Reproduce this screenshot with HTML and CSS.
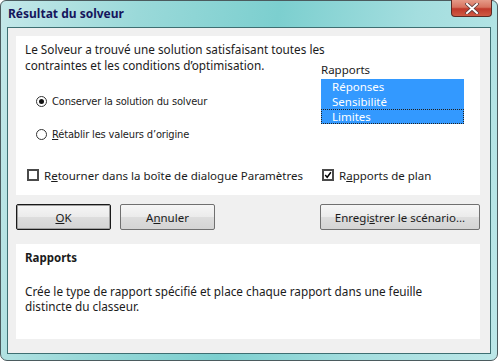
FILE: index.html
```html
<!DOCTYPE html>
<html lang="fr">
<head>
<meta charset="utf-8">
<link rel="stylesheet" href="styles.css">
</head>
<body>
<div class="window">
  <div class="titlebar">
    <span class="title">Résultat du solveur</span>
    <span class="close"><svg width="14" height="11" viewBox="0 0 14 11"><path d="M2 1 L12 10 M12 1 L2 10" stroke="#5a3a3a" stroke-width="3.6" stroke-linecap="square"/><path d="M2 1 L12 10 M12 1 L2 10" stroke="#ffffff" stroke-width="2" stroke-linecap="square"/></svg></span>
  </div>
  <div class="client">
    <div class="panel top-panel">
      <div class="main-row">
        <div class="left-col">
          <p class="intro">Le Solveur a trouvé une solution satisfaisant toutes les<br>contraintes et les conditions d’optimisation.</p>
          <div class="radio-row first"><span class="radio checked"></span><span class="tlabel">Conserver la solution du solveur</span></div>
          <div class="radio-row"><span class="radio"></span><span class="tlabel"><u>R</u>établir les valeurs d’origine</span></div>
        </div>
        <div class="right-col">
          <div class="list-label">Rapports</div>
          <div class="listbox">
            <div class="item">Réponses</div>
            <div class="item">Sensibilité</div>
            <div class="item focus">Limites</div>
          </div>
        </div>
      </div>
      <div class="check-row">
        <div class="check"><span class="box"></span><span>R<u>e</u>tourner dans la boîte de dialogue Paramètres</span></div>
        <div class="check right"><span class="box checked"><svg width="10" height="10" viewBox="0 0 10 10"><path d="M1.5 5 L4 7.8 L8.6 1.6" fill="none" stroke="#000" stroke-width="1.8"/></svg></span><span>R<u>a</u>pports de plan</span></div>
      </div>
    </div>
    <div class="buttons">
      <button class="btn default"><u>O</u>K</button>
      <button class="btn cancel">A<u>n</u>nuler</button>
      <span class="spacer"></span>
      <button class="btn save">Enregi<u>s</u>trer le scénario...</button>
    </div>
    <div class="panel bottom-panel">
      <div class="help-title">Rapports</div>
      <p class="help-text">Crée le type de rapport spécifié et place chaque rapport dans une feuille<br>distincte du classeur.</p>
    </div>
  </div>
</div>
</body>
</html>
```
FILE: styles.css
```css
html, body {
  margin: 0;
  padding: 0;
  background: #ffffff;
}
body {
  font-family: "Noto Sans", "Open Sans", sans-serif;
  font-size: 11.5px;
  color: #1b1b1b;
}
.window {
  box-sizing: border-box;
  width: 498px;
  height: 361px;
  border: 1px solid #4b5b5e;
  border-radius: 6px 6px 7px 7px;
  background: linear-gradient(100deg, #c4e8e9 0%, #9ad9d9 25%, #7ccfcf 50%, #a4dedf 75%, #bce7e8 100%);
  padding: 0 6px 6px 6px;
  display: flex;
  flex-direction: column;
}
.titlebar {
  height: 26px;
  display: flex;
  align-items: flex-start;
  justify-content: space-between;
}
.title {
  font-family: "Noto Sans", sans-serif;
  font-weight: bold;
  font-size: 12px;
  color: #15155c;
  margin: 5px 0 0 1px;
  line-height: 16px;
}
.close {
  width: 41px;
  height: 17px;
  margin-top: -1px;
  margin-right: -1px;
  box-sizing: border-box;
  border: 1px solid #5b2a24;
  border-top: none;
  border-radius: 0 0 4px 4px;
  background: linear-gradient(#e59a88 0%, #d7735f 45%, #c0392a 55%, #cf5a44 100%);
  display: flex;
  align-items: center;
  justify-content: center;
}
.client {
  flex: 1;
  border: 1px solid #3e6f72;
  background: #f0f0f0;
  padding: 8px 10px 0 8px;
  display: flex;
  flex-direction: column;
}
.panel {
  background: #ffffff;
}
.top-panel {
  height: 159px;
  padding: 5px 0 0 0;
  box-sizing: border-box;
  display: flex;
  flex-direction: column;
}
.main-row {
  display: flex;
}
.left-col {
  width: 296px;
  padding-left: 9px;
  box-sizing: border-box;
}
.intro {
  margin: 0;
  line-height: 16px;
  white-space: nowrap;
  font-size: 11.75px;
}
.radio-row {
  display: flex;
  align-items: center;
  height: 16px;
  margin-top: 17px;
  padding-left: 11px;
  font-family: "DejaVu Sans Condensed", "DejaVu Sans", sans-serif;
  font-size: 11px;
  letter-spacing: -0.15px;
}
.radio-row.first {
  margin-top: 20px;
}
.radio {
  width: 11px;
  height: 11px;
  box-sizing: border-box;
  border: 1px solid #333;
  border-radius: 50%;
  background: #fff;
  margin-right: 5px;
  position: relative;
}
.radio.checked::after {
  content: "";
  position: absolute;
  left: 2px;
  top: 2px;
  width: 5px;
  height: 5px;
  border-radius: 50%;
  background: #111;
}
.right-col {
  padding-top: 21px;
  padding-left: 9px;
}
.list-label {
  line-height: 16px;
  height: 16px;
}
.listbox {
  width: 143px;
  margin-top: 1px;
  background: #3399ff;
}
.item {
  height: 15px;
  line-height: 15px;
  color: #ffffff;
  padding-left: 11px;
  box-sizing: border-box;
}
.item.focus {
  border: 1px dotted #202020;
  padding-left: 10px;
  line-height: 13px;
}
.check-row {
  display: flex;
  margin-top: 25px;
  padding-left: 11px;
  height: 16px;
  align-items: center;
}
.check {
  display: flex;
  align-items: center;
}
.check.right {
  margin-left: 19px;
}
.box {
  width: 12px;
  height: 12px;
  box-sizing: border-box;
  border: 2px solid #4a4a4a;
  background: #fff;
  margin-right: 5px;
  display: flex;
  align-items: center;
  justify-content: center;
}
.box svg {
  display: block;
}
.buttons {
  display: flex;
  margin-top: 9px;
  height: 26px;
}
.btn {
  box-sizing: border-box;
  height: 26px;
  border: 1px solid #707070;
  border-radius: 2px;
  background: linear-gradient(#f6f6f6 0%, #ebebeb 50%, #dddddd 51%, #d4d4d4 100%);
  font-family: "Noto Sans", sans-serif;
  font-size: 11.5px;
  color: #1b1b1b;
  padding: 0;
  margin: 0;
}
.btn.default {
  width: 95px;
  border: 1px solid #1a1a1a;
  box-shadow: inset 0 0 0 1px #a0a0a0;
}
.btn.cancel {
  width: 95px;
  margin-left: 9px;
}
.spacer {
  flex: 1;
}
.btn.save {
  width: 160px;
}
.bottom-panel {
  margin-top: 14px;
  height: 95px;
  box-sizing: border-box;
  padding: 6px 9px 0 9px;
}
.help-title {
  font-weight: bold;
  line-height: 16px;
}
.help-text {
  margin: 18px 0 0 0;
  line-height: 15px;
  white-space: nowrap;
  font-size: 11.75px;
}
```
